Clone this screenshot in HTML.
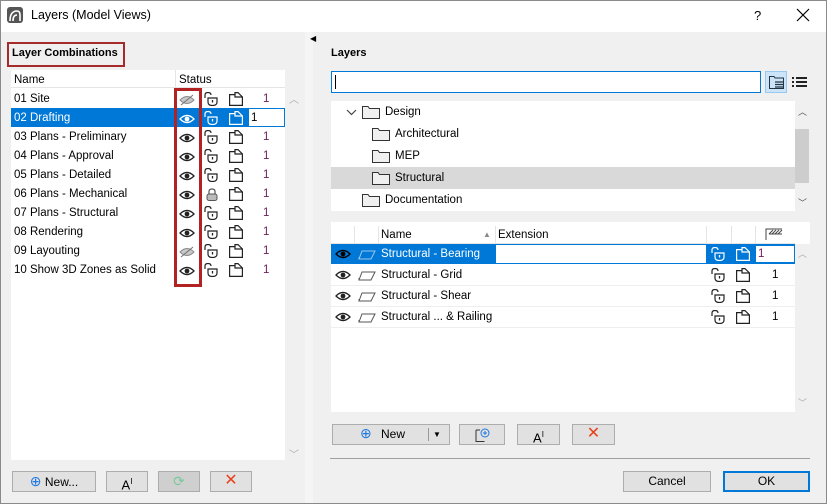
<!DOCTYPE html>
<html><head><meta charset="utf-8"><style>
*{box-sizing:border-box;margin:0;padding:0}
body{width:827px;height:504px;overflow:hidden;background:#f0f0f0;font-family:"Liberation Sans",sans-serif;font-size:11.5px;color:#000;position:relative}
.a{position:absolute}
.win{left:0;top:0;width:827px;height:504px;border:1px solid #8a8a8a}
.title{left:1px;top:1px;width:825px;height:31px;background:#fff}
.row{position:absolute;left:0;height:19px;width:237px;line-height:20px;padding-left:3px}
.sel{background:#0078d7;color:#fff}
.num{color:#6b1f57}
.btn{position:absolute;height:21px;background:#e1e1e1;border:1px solid #adadad;text-align:center;line-height:19px;font-size:12px}
svg{position:absolute;overflow:visible}
</style></head><body>
<svg width="0" height="0" style="position:absolute">
<defs>
<symbol id="eye" viewBox="0 0 16 10"><path d="M1 5 Q8 -2 15 5 Q8 12 1 5Z" fill="none" stroke="currentColor" stroke-width="1.3"/><circle cx="8" cy="5" r="2.4" fill="currentColor"/></symbol>
<symbol id="eyeoff" viewBox="0 0 16 12"><path d="M1 6 Q8 -1 15 6 Q8 13 1 6Z" fill="#c8c8c8" stroke="#888" stroke-width="1"/><path d="M2 11 L14 1" stroke="#777" stroke-width="1.1"/></symbol>
<symbol id="lock" viewBox="0 0 14 14"><path d="M1 6 V3 Q1 0.5 4 0.5 Q7 0.5 7 3" fill="none" stroke="currentColor" stroke-width="1.2"/><path d="M4 6 H13 V10 Q13 13.5 8.5 13.5 Q4 13.5 4 10Z" fill="none" stroke="currentColor" stroke-width="1.2"/><path d="M8.5 8 V10.5" stroke="currentColor" stroke-width="1.3"/></symbol>
<symbol id="doc" viewBox="0 0 14 14"><path d="M0.6 2.6 H6 V0.6 H9 L13.4 5 V13.4 H0.6Z" fill="none" stroke="currentColor" stroke-width="1.2"/><path d="M6 2.6 V5 H13.4" fill="none" stroke="currentColor" stroke-width="1.2"/></symbol>
<symbol id="fold" viewBox="0 0 18 14"><path d="M0.5 1.5 H6 L7.5 3.5 H17.5 V13.5 H0.5Z" fill="#f0f0f0" stroke="#333" stroke-width="1"/></symbol>
<symbol id="lay" viewBox="0 0 18 10"><path d="M4 1 H17 L13 9 H1Z M1 9 L1 7" fill="none" stroke="currentColor" stroke-width="1"/></symbol>
</defs></svg>
<div class="a win"></div>
<div class="a title"></div>
<svg style="left:7px;top:7px" width="16" height="16" viewBox="0 0 16 16"><rect x="0" y="0" width="16" height="16" rx="3" fill="#555"/><path d="M3 14 Q3 4 10 4 Q13 4 13 8 L13 14 M6 14 Q6 8 10 8" fill="none" stroke="#fff" stroke-width="1.6"/></svg>
<div class="a" style="left:31px;top:8px;font-size:12.5px">Layers (Model Views)</div>
<div class="a" style="left:754px;top:8px;font-size:13px">?</div>
<svg style="left:797px;top:9px" width="12" height="12"><path d="M0 0L12 12M12 0L0 12" stroke="#000" stroke-width="1.2"/></svg>

<!-- left panel -->
<div class="a" style="left:7px;top:42px;width:118px;height:25px;border:2px solid #a52a2a"></div>
<div class="a" style="left:12px;top:47px;font-weight:bold;font-size:11px">Layer Combinations</div>
<div class="a" style="left:11px;top:70px;width:274px;height:390px;background:#fff"></div>
<div class="a" style="left:11px;top:70px;width:274px;height:18px;background:#fff;border-bottom:1px solid #e5e5e5"></div>
<div class="a" style="left:175px;top:70px;width:1px;height:18px;background:#e5e5e5"></div>
<div class="a" style="left:14px;top:74px">Name</div>
<div class="a" style="left:179px;top:74px">Status</div>
<div class="a" style="left:285px;top:88px;width:15px;height:372px;background:#f0f0f0"></div>
<div class="a" style="left:289px;top:91px;color:#aaa;font-size:10px">︿</div>
<div class="a" style="left:289px;top:446px;color:#aaa;font-size:10px">﹀</div>
<div class="a" style="left:11px;top:89px;width:274px;height:190px">
<div class="row" style="top:0">01 Site</div>
<div class="row sel" style="top:19px">02 Drafting</div>
<div class="row" style="top:38px">03 Plans - Preliminary</div>
<div class="row" style="top:57px">04 Plans - Approval</div>
<div class="row" style="top:76px">05 Plans - Detailed</div>
<div class="row" style="top:95px">06 Plans - Mechanical</div>
<div class="row" style="top:114px">07 Plans - Structural</div>
<div class="row" style="top:133px">08 Rendering</div>
<div class="row" style="top:152px">09 Layouting</div>
<div class="row" style="top:171px">10 Show 3D Zones as Solid</div>
<div class="a" style="left:237px;top:19px;width:37px;height:19px;background:#fff;border:1px solid #0078d7;padding-left:2px;line-height:18px">1</div>
</div>
<!-- status icons -->
<div class="a" style="left:179px;top:93px;width:16px;height:190px;color:#222">
<svg style="left:0;top:1px" width="16" height="12"><use href="#eyeoff"/></svg>
<svg style="left:0;top:21px;color:#fff" width="16" height="10"><use href="#eye"/></svg>
<svg style="left:0;top:40px" width="16" height="10"><use href="#eye"/></svg>
<svg style="left:0;top:59px" width="16" height="10"><use href="#eye"/></svg>
<svg style="left:0;top:78px" width="16" height="10"><use href="#eye"/></svg>
<svg style="left:0;top:97px" width="16" height="10"><use href="#eye"/></svg>
<svg style="left:0;top:116px" width="16" height="10"><use href="#eye"/></svg>
<svg style="left:0;top:135px" width="16" height="10"><use href="#eye"/></svg>
<svg style="left:0;top:153px" width="16" height="12"><use href="#eyeoff"/></svg>
<svg style="left:0;top:173px" width="16" height="10"><use href="#eye"/></svg>
</div>
<div class="a" style="left:204px;top:92px;width:14px;height:190px;color:#222">
<svg style="top:0" width="14" height="14"><use href="#lock"/></svg>
<svg style="top:19px;color:#fff" width="14" height="14"><use href="#lock"/></svg>
<svg style="top:38px" width="14" height="14"><use href="#lock"/></svg>
<svg style="top:57px" width="14" height="14"><use href="#lock"/></svg>
<svg style="top:76px" width="14" height="14"><use href="#lock"/></svg>
<svg style="top:96px;left:2px" width="12" height="13" viewBox="0 0 12 13"><path d="M3 6 V3.5 Q3 1 6 1 Q9 1 9 3.5 V6" fill="none" stroke="#555" stroke-width="1.2"/><rect x="1" y="6" width="10" height="6.5" rx="2" fill="#bbb" stroke="#555"/></svg>
<svg style="top:114px" width="14" height="14"><use href="#lock"/></svg>
<svg style="top:133px" width="14" height="14"><use href="#lock"/></svg>
<svg style="top:152px" width="14" height="14"><use href="#lock"/></svg>
<svg style="top:171px" width="14" height="14"><use href="#lock"/></svg>
</div>
<div class="a" style="left:229px;top:92px;width:14px;height:190px;color:#222">
<svg style="top:0" width="14" height="14"><use href="#doc"/></svg>
<svg style="top:19px;color:#fff" width="14" height="14"><use href="#doc"/></svg>
<svg style="top:38px" width="14" height="14"><use href="#doc"/></svg>
<svg style="top:57px" width="14" height="14"><use href="#doc"/></svg>
<svg style="top:76px" width="14" height="14"><use href="#doc"/></svg>
<svg style="top:95px" width="14" height="14"><use href="#doc"/></svg>
<svg style="top:114px" width="14" height="14"><use href="#doc"/></svg>
<svg style="top:133px" width="14" height="14"><use href="#doc"/></svg>
<svg style="top:152px" width="14" height="14"><use href="#doc"/></svg>
<svg style="top:171px" width="14" height="14"><use href="#doc"/></svg>
</div>
<div class="a num" style="left:263px;top:90px;line-height:19px">1<br><span style="visibility:hidden">1</span><br>1<br>1<br>1<br>1<br>1<br>1<br>1<br>1</div>
<div class="a" style="left:174px;top:88px;width:28px;height:199px;border:3px solid #b22222"></div>

<div class="btn" style="left:12px;top:471px;width:84px"><span style="color:#1e78e0;font-size:14px">⊕</span> New...</div>
<div class="btn" style="left:106px;top:471px;width:42px;font-size:13px">A<sup style="font-size:8px">I</sup></div>
<div class="btn" style="left:158px;top:471px;width:42px;background:#cfcfcf;color:#7ac99a;font-size:14px">⟳</div>
<div class="btn" style="left:210px;top:471px;width:42px;color:#e8411c;font-size:16px;line-height:18px">✕</div>

<!-- divider -->
<div class="a" style="left:305px;top:32px;width:8px;height:471px;background:#f5f5f5"></div>
<div class="a" style="left:310px;top:34px;font-size:8px">◀</div>

<!-- right panel -->
<div class="a" style="left:331px;top:47px;font-weight:bold;font-size:11px">Layers</div>
<div class="a" style="left:331px;top:71px;width:430px;height:22px;background:#fff;border:1px solid #0078d7"></div>
<div class="a" style="left:335px;top:75px;width:1px;height:14px;background:#000"></div>
<div class="a" style="left:765px;top:71px;width:22px;height:22px;background:#cce4f7;border:1px solid #99c9ef"></div>
<svg style="left:769px;top:76px" width="15" height="13" viewBox="0 0 15 13"><path d="M.5 .5H5L6 2H14.5V12.5H.5Z" fill="none" stroke="#234"/><path d="M6 6H14M6 8.5H14M6 11H14" stroke="#234" stroke-width="1.3"/></svg>
<svg style="left:791px;top:76px" width="16" height="12" viewBox="0 0 16 12"><path d="M1 2H3M5 2H16M1 6H3M5 6H16M1 10H3M5 10H16" stroke="#222" stroke-width="2"/></svg>

<div class="a" style="left:331px;top:101px;width:464px;height:110px;background:#fff"></div>
<div class="a" style="left:331px;top:167px;width:464px;height:22px;background:#d9d9d9"></div>
<div class="a" style="left:795px;top:101px;width:15px;height:110px;background:#f0f0f0"></div>
<div class="a" style="left:795px;top:129px;width:14px;height:54px;background:#cdcdcd"></div>
<div class="a" style="left:798px;top:105px;font-size:9px;color:#555">︿</div>
<div class="a" style="left:798px;top:196px;font-size:9px;color:#555">﹀</div>
<svg style="left:347px;top:110px" width="9" height="5"><path d="M0 0L4.5 4.5L9 0" fill="none" stroke="#444" stroke-width="1.2"/></svg>
<svg style="left:362px;top:105px" width="18" height="14"><use href="#fold"/></svg>
<div class="a" style="left:385px;top:106px">Design</div>
<svg style="left:372px;top:127px" width="18" height="14"><use href="#fold"/></svg>
<div class="a" style="left:395px;top:128px">Architectural</div>
<svg style="left:372px;top:149px" width="18" height="14"><use href="#fold"/></svg>
<div class="a" style="left:395px;top:150px">MEP</div>
<svg style="left:372px;top:171px" width="18" height="14"><use href="#fold"/></svg>
<div class="a" style="left:395px;top:172px">Structural</div>
<svg style="left:362px;top:193px" width="18" height="14"><use href="#fold"/></svg>
<div class="a" style="left:385px;top:194px">Documentation</div>

<div class="a" style="left:331px;top:222px;width:479px;height:190px;background:#fff"></div>
<div class="a" style="left:795px;top:244px;width:15px;height:168px;background:#f0f0f0"></div>
<div class="a" style="left:798px;top:247px;font-size:9px;color:#aaa">︿</div>
<div class="a" style="left:798px;top:396px;font-size:9px;color:#aaa">﹀</div>
<div class="a" style="left:331px;top:243px;width:464px;height:1px;background:#e5e5e5"></div>
<div class="a" style="left:354px;top:226px;width:1px;height:17px;background:#e5e5e5"></div>
<div class="a" style="left:378px;top:226px;width:1px;height:17px;background:#e5e5e5"></div>
<div class="a" style="left:495px;top:226px;width:1px;height:17px;background:#e5e5e5"></div>
<div class="a" style="left:706px;top:226px;width:1px;height:17px;background:#e5e5e5"></div>
<div class="a" style="left:731px;top:226px;width:1px;height:17px;background:#e5e5e5"></div>
<div class="a" style="left:755px;top:226px;width:1px;height:17px;background:#e5e5e5"></div>
<div class="a" style="left:381px;top:229px">Name</div>
<div class="a" style="left:483px;top:230px;font-size:8px;color:#888">▲</div>
<div class="a" style="left:498px;top:229px">Extension</div>
<svg style="left:765px;top:228px" width="18" height="12" viewBox="0 0 18 12"><path d="M1 12V1H17M4 6L8 2M7 6L11 2M10 6L14 2M13 6L17 2M4 6H17" fill="none" stroke="#444"/></svg>
<div class="a" style="left:331px;top:244px;width:464px;height:20px;background:#0078d7"></div>
<div class="a" style="left:496px;top:245px;width:210px;height:18px;background:#fff"></div>
<div class="a" style="left:755px;top:245px;width:40px;height:18px;background:#fff;border:1px solid #0078d7;padding-left:2px;line-height:16px;color:#6b1f57">1</div>
<div class="a" style="left:331px;top:285px;width:464px;height:1px;background:#eee"></div>
<div class="a" style="left:331px;top:306px;width:464px;height:1px;background:#eee"></div>
<div class="a" style="left:331px;top:327px;width:464px;height:1px;background:#eee"></div>
<svg style="left:335px;top:249px;color:#000" width="16" height="10"><use href="#eye"/></svg>
<svg style="left:335px;top:270px;color:#222" width="16" height="10"><use href="#eye"/></svg>
<svg style="left:335px;top:291px;color:#222" width="16" height="10"><use href="#eye"/></svg>
<svg style="left:335px;top:312px;color:#222" width="16" height="10"><use href="#eye"/></svg>
<svg style="left:358px;top:250px;color:#9cc6ee" width="18" height="10"><use href="#lay"/></svg>
<svg style="left:358px;top:271px;color:#555" width="18" height="10"><use href="#lay"/></svg>
<svg style="left:358px;top:292px;color:#555" width="18" height="10"><use href="#lay"/></svg>
<svg style="left:358px;top:313px;color:#555" width="18" height="10"><use href="#lay"/></svg>
<div class="a" style="left:381px;top:248px;color:#fff">Structural - Bearing</div>
<div class="a" style="left:381px;top:269px">Structural - Grid</div>
<div class="a" style="left:381px;top:290px">Structural - Shear</div>
<div class="a" style="left:381px;top:311px">Structural ... &amp; Railing</div>
<svg style="left:711px;top:247px;color:#fff" width="14" height="14"><use href="#lock"/></svg>
<svg style="left:711px;top:268px;color:#222" width="14" height="14"><use href="#lock"/></svg>
<svg style="left:711px;top:289px;color:#222" width="14" height="14"><use href="#lock"/></svg>
<svg style="left:711px;top:310px;color:#222" width="14" height="14"><use href="#lock"/></svg>
<svg style="left:736px;top:247px;color:#fff" width="14" height="14"><use href="#doc"/></svg>
<svg style="left:736px;top:268px;color:#222" width="14" height="14"><use href="#doc"/></svg>
<svg style="left:736px;top:289px;color:#222" width="14" height="14"><use href="#doc"/></svg>
<svg style="left:736px;top:310px;color:#222" width="14" height="14"><use href="#doc"/></svg>
<div class="a" style="left:772px;top:269px">1</div>
<div class="a" style="left:772px;top:290px">1</div>
<div class="a" style="left:772px;top:311px">1</div>

<div class="btn" style="left:332px;top:424px;width:118px;text-align:left;padding-left:28px"><span style="color:#1e78e0;font-size:14px;position:absolute;left:27px;top:-1px">⊕</span><span style="position:absolute;left:48px">New</span><span style="position:absolute;left:95px;top:3px;width:1px;height:13px;background:#999"></span><span style="position:absolute;left:100px;font-size:8px">▼</span></div>
<div class="btn" style="left:459px;top:424px;width:46px"><svg style="left:15px;top:3px" width="16" height="14" viewBox="0 0 16 14"><path d="M1 2V13.5H9.5M1 2H5" fill="none" stroke="#333"/><circle cx="10" cy="5" r="4" fill="none" stroke="#1e78e0"/><path d="M10 3V7M8 5H12" stroke="#1e78e0"/></svg></div>
<div class="btn" style="left:517px;top:424px;width:43px;font-size:13px">A<sup style="font-size:8px">I</sup></div>
<div class="btn" style="left:572px;top:424px;width:43px;color:#e8411c;font-size:16px;line-height:18px">✕</div>
<div class="a" style="left:330px;top:458px;width:480px;height:1px;background:#a0a0a0"></div>
<div class="btn" style="left:623px;top:471px;width:88px">Cancel</div>
<div class="btn" style="left:723px;top:471px;width:87px;border:2px solid #0078d7;line-height:17px">OK</div>
</body></html>
